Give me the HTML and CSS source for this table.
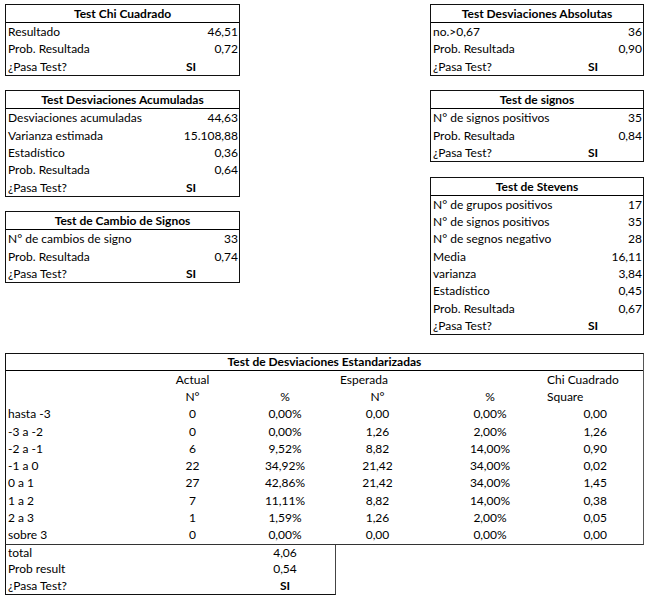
FILE: index.html
```html
<!DOCTYPE html>
<html lang="es">
<head>
<meta charset="utf-8">
<title>Tests de aleatoriedad</title>
<link rel="stylesheet" href="styles.css">
</head>
<body>
<div class="page">
  <div class="top">
    <div class="col col-left">
      <div class="box">
        <div class="hd">Test Chi Cuadrado</div>
        <div class="row"><span class="lb">Resultado</span><span class="val">46,51</span></div>
        <div class="row"><span class="lb">Prob. Resultada</span><span class="val">0,72</span></div>
        <div class="row"><span class="lb">¿Pasa Test?</span><span class="si">SI</span></div>
      </div>
      <div class="box">
        <div class="hd">Test Desviaciones Acumuladas</div>
        <div class="row"><span class="lb">Desviaciones acumuladas</span><span class="val">44,63</span></div>
        <div class="row"><span class="lb">Varianza estimada</span><span class="val">15.108,88</span></div>
        <div class="row"><span class="lb">Estadístico</span><span class="val">0,36</span></div>
        <div class="row"><span class="lb">Prob. Resultada</span><span class="val">0,64</span></div>
        <div class="row"><span class="lb">¿Pasa Test?</span><span class="si">SI</span></div>
      </div>
      <div class="box">
        <div class="hd">Test de Cambio de Signos</div>
        <div class="row"><span class="lb">N° de cambios de signo</span><span class="val">33</span></div>
        <div class="row"><span class="lb">Prob. Resultada</span><span class="val">0,74</span></div>
        <div class="row"><span class="lb">¿Pasa Test?</span><span class="si">SI</span></div>
      </div>
    </div>
    <div class="col col-right">
      <div class="box">
        <div class="hd">Test Desviaciones Absolutas</div>
        <div class="row"><span class="lb">no.&gt;0,67</span><span class="val">36</span></div>
        <div class="row"><span class="lb">Prob. Resultada</span><span class="val">0,90</span></div>
        <div class="row"><span class="lb">¿Pasa Test?</span><span class="si">SI</span></div>
      </div>
      <div class="box">
        <div class="hd">Test de signos</div>
        <div class="row"><span class="lb">N° de signos positivos</span><span class="val">35</span></div>
        <div class="row"><span class="lb">Prob. Resultada</span><span class="val">0,84</span></div>
        <div class="row"><span class="lb">¿Pasa Test?</span><span class="si">SI</span></div>
      </div>
      <div class="box">
        <div class="hd">Test de Stevens</div>
        <div class="row"><span class="lb">N° de grupos positivos</span><span class="val">17</span></div>
        <div class="row"><span class="lb">N° de signos positivos</span><span class="val">35</span></div>
        <div class="row"><span class="lb">N° de segnos negativo</span><span class="val">28</span></div>
        <div class="row"><span class="lb">Media</span><span class="val">16,11</span></div>
        <div class="row"><span class="lb">varianza</span><span class="val">3,84</span></div>
        <div class="row"><span class="lb">Estadístico</span><span class="val">0,45</span></div>
        <div class="row"><span class="lb">Prob. Resultada</span><span class="val">0,67</span></div>
        <div class="row"><span class="lb">¿Pasa Test?</span><span class="si">SI</span></div>
      </div>
    </div>
  </div>

  <div class="std">
    <div class="hd">Test de Desviaciones Estandarizadas</div>
    <div class="grid">
      <span class="c-a"></span><span class="c-b">Actual</span><span class="c-c"></span><span class="c-dl">Esperada</span><span class="c-e"></span><span class="c-fl">Chi Cuadrado</span>
      <span class="c-a"></span><span class="c-b">N°</span><span class="c-c">%</span><span class="c-d">N°</span><span class="c-e">%</span><span class="c-fl">Square</span>
      <span class="c-a">hasta -3</span><span class="c-b">0</span><span class="c-c">0,00%</span><span class="c-d">0,00</span><span class="c-e">0,00%</span><span class="c-f">0,00</span>
      <span class="c-a">-3 a -2</span><span class="c-b">0</span><span class="c-c">0,00%</span><span class="c-d">1,26</span><span class="c-e">2,00%</span><span class="c-f">1,26</span>
      <span class="c-a">-2 a -1</span><span class="c-b">6</span><span class="c-c">9,52%</span><span class="c-d">8,82</span><span class="c-e">14,00%</span><span class="c-f">0,90</span>
      <span class="c-a">-1 a 0</span><span class="c-b">22</span><span class="c-c">34,92%</span><span class="c-d">21,42</span><span class="c-e">34,00%</span><span class="c-f">0,02</span>
      <span class="c-a">0 a 1</span><span class="c-b">27</span><span class="c-c">42,86%</span><span class="c-d">21,42</span><span class="c-e">34,00%</span><span class="c-f">1,45</span>
      <span class="c-a">1 a 2</span><span class="c-b">7</span><span class="c-c">11,11%</span><span class="c-d">8,82</span><span class="c-e">14,00%</span><span class="c-f">0,38</span>
      <span class="c-a">2 a 3</span><span class="c-b">1</span><span class="c-c">1,59%</span><span class="c-d">1,26</span><span class="c-e">2,00%</span><span class="c-f">0,05</span>
      <span class="c-a">sobre 3</span><span class="c-b">0</span><span class="c-c">0,00%</span><span class="c-d">0,00</span><span class="c-e">0,00%</span><span class="c-f">0,00</span>
    </div>
  </div>
  <div class="sub">
    <span class="c-a">total</span><span class="c-b"></span><span class="c-c">4,06</span>
    <span class="c-a">Prob result</span><span class="c-b"></span><span class="c-c">0,54</span>
    <span class="c-a">¿Pasa Test?</span><span class="c-b"></span><span class="c-c bold">SI</span>
  </div>
</div>
</body>
</html>
```

FILE: styles.css
```css
html, body {
  margin: 0;
  padding: 0;
  background: #ffffff;
}

body {
  font-family: Lato, "Open Sans", "Liberation Sans", sans-serif;
  font-size: 12px;
  color: #000;
}

.page {
  padding: 4px 0 0 5px;
  width: 639px;
}

.top {
  display: flex;
  justify-content: space-between;
  align-items: flex-start;
}

.col {
  display: flex;
  flex-direction: column;
  gap: 14.5px;
}

.col-left { width: 235px; }
.col-right { width: 214px; }

.box {
  border: 1px solid #111;
}

.hd {
  height: 17px;
  line-height: 17px;
  border-bottom: 1px solid #000;
  text-align: center;
  font-weight: 700;
}

.row {
  display: grid;
  height: 17.3px;
  line-height: 17.3px;
  white-space: nowrap;
}

.col-left .row { grid-template-columns: minmax(0, 1fr) 90px; }
.col-right .row { grid-template-columns: minmax(0, 1fr) 100px; }

.lb { padding-left: 2px; }

.val {
  text-align: right;
  padding-right: 1px;
}

.si {
  text-align: center;
  font-weight: 700;
}

.col-left .si { padding-right: 6px; }

.std {
  margin-top: 17.5px;
  border: 1px solid #111;
  border-right-color: #555;
  border-bottom-color: #333;
}

.std .hd {
  height: 16px;
  line-height: 16px;
}

.grid {
  display: grid;
  grid-template-columns: 144px 85px 100px 85px 124px 99px;
  grid-auto-rows: 17.3px;
  line-height: 17.3px;
  white-space: nowrap;
}

.c-a { padding-left: 2px; }
.c-b, .c-c, .c-d { text-align: center; }
.c-dl { padding-left: 5px; }
.c-e { text-align: center; padding-left: 16px; }
.c-f { text-align: right; padding-right: 36px; }
.c-fl { padding-left: 3px; overflow: visible; }

.sub {
  display: grid;
  grid-template-columns: 144px 85px 100px;
  grid-auto-rows: 16.6px;
  line-height: 16.6px;
  width: 329px;
  border: 1px solid #111;
  border-top: none;
  border-right-color: #444;
  white-space: nowrap;
}

.bold { font-weight: 700; }
```
